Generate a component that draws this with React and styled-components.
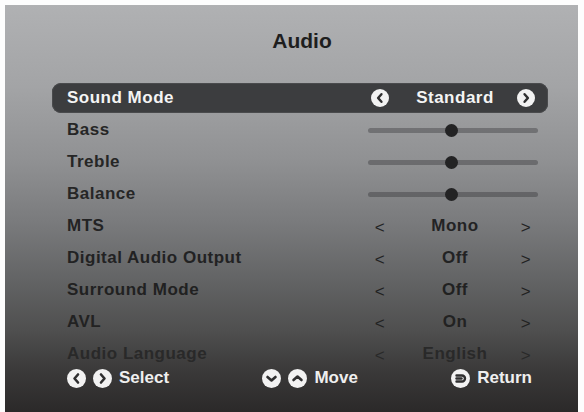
import React from "react";
import styled, { createGlobalStyle } from "styled-components";

const GlobalStyle = createGlobalStyle`
  html, body {
    margin: 0;
    padding: 0;
    background: #fdfdfd;
    font-family: "Liberation Sans", Arial, sans-serif;
  }
`;

const Screen = styled.div`
  margin: 5px 0 0 5px;
  width: 573px;
  height: 407px;
  box-sizing: border-box;
  padding: 24px 0 0 47px;
  background: linear-gradient(
    to bottom,
    #b0b1b3 0%,
    #a3a4a6 20%,
    #909193 38%,
    #7a7b7d 53%,
    #626364 68%,
    #4f4f4f 80%,
    #3a3939 90%,
    #2b2929 100%
  );
  overflow: hidden;
`;

const Title = styled.h1`
  margin: 0;
  width: 496px;
  padding-left: 4px;
  box-sizing: border-box;
  text-align: center;
  font-size: 21px;
  line-height: 24px;
  font-weight: bold;
  color: #1e1e1e;
`;

const List = styled.div`
  margin-top: 30px;
  width: 496px;
  display: flex;
  flex-direction: column;
  gap: 2px;
`;

const Row = styled.div`
  height: 30px;
  display: flex;
  align-items: center;
  justify-content: space-between;
  padding: 0 10px 0 15px;
  border-radius: 9px;
  background: ${(p) => (p.$active ? "#3c3d3f" : "transparent")};
  box-shadow: ${(p) => (p.$active ? "inset 0 0 0 1px #4a4b4d" : "none")};
  color: ${(p) => (p.$active ? "#f4f4f4" : p.$color || "#262626")};
  font-size: 17px;
  font-weight: bold;
  letter-spacing: 0.5px;
`;

const Label = styled.span`
  white-space: nowrap;
`;

const Control = styled.div`
  width: 170px;
  display: grid;
  grid-template-columns: 24px 1fr 24px;
  align-items: center;
  justify-items: center;
`;

const Value = styled.span`
  padding-left: 4px;
`;

const Arrow = styled.span`
  font-size: 17px;
  font-weight: normal;
  padding-top: 4px;
`;

const Track = styled.div`
  position: relative;
  width: 170px;
  height: 5px;
  border-radius: 3px;
  background: rgba(40, 40, 42, 0.35);
`;

const Knob = styled.div`
  position: absolute;
  top: 50%;
  width: 13px;
  height: 13px;
  margin: -6.5px 0 0 -6.5px;
  border-radius: 50%;
  background: #232324;
`;

const Footer = styled.div`
  margin: -1px 0 0 15px;
  width: 465px;
  height: 20px;
  display: flex;
  justify-content: space-between;
  align-items: center;
`;

const Hint = styled.div`
  display: flex;
  align-items: center;
  gap: 7px;
  color: #efefef;
  font-size: 17px;
  font-weight: bold;
`;

const HintText = styled.span`
  margin-left: 0;
`;

const chevrons = {
  left: "M11 5.5 L7.5 9.5 L11 13.5",
  right: "M8 5.5 L11.5 9.5 L8 13.5",
  down: "M5.5 8 L9.5 11.5 L13.5 8",
  up: "M5.5 11 L9.5 7.5 L13.5 11",
};

const RoundIcon = ({ dir, size = 19, bg = "#f2f2f2", fg = "#2f2f30" }) => (
  <svg width={size} height={size} viewBox="0 0 19 19">
    <circle cx="9.5" cy="9.5" r="9.5" fill={bg} />
    {dir === "return" ? (
      <g fill="none" stroke={fg} strokeWidth="2.4" strokeLinecap="round" strokeLinejoin="round">
        <path d="M5.5 6.5 H11 a3 3 0 0 1 0 6 H5.5" />
        <path d="M5.5 9.5 H10.5" />
      </g>
    ) : (
      <path
        d={chevrons[dir]}
        fill="none"
        stroke={fg}
        strokeWidth="2.6"
        strokeLinecap="round"
        strokeLinejoin="round"
      />
    )}
  </svg>
);

const Slider = ({ value }) => (
  <Track>
    <Knob style={{ left: `${value}%` }} />
  </Track>
);

const items = [
  { label: "Bass", slider: 49 },
  { label: "Treble", slider: 49 },
  { label: "Balance", slider: 49 },
  { label: "MTS", value: "Mono", color: "#232324" },
  { label: "Digital Audio Output", value: "Off", color: "#222223" },
  { label: "Surround Mode", value: "Off", color: "#212121" },
  { label: "AVL", value: "On", color: "#222222" },
  { label: "Audio Language", value: "English", color: "#292929" },
];

const App = () => (
  <>
    <GlobalStyle />
    <Screen>
      <Title>Audio</Title>
      <List>
        <Row $active>
          <Label>Sound Mode</Label>
          <Control>
            <RoundIcon dir="left" size={18} />
            <Value>Standard</Value>
            <RoundIcon dir="right" size={18} />
          </Control>
        </Row>
        {items.map((it) => (
          <Row key={it.label} $color={it.color}>
            <Label>{it.label}</Label>
            {it.slider !== undefined ? (
              <Slider value={it.slider} />
            ) : (
              <Control>
                <Arrow>&lt;</Arrow>
                <Value>{it.value}</Value>
                <Arrow>&gt;</Arrow>
              </Control>
            )}
          </Row>
        ))}
      </List>
      <Footer>
        <Hint>
          <RoundIcon dir="left" />
          <RoundIcon dir="right" />
          <HintText>Select</HintText>
        </Hint>
        <Hint>
          <RoundIcon dir="down" />
          <RoundIcon dir="up" />
          <HintText>Move</HintText>
        </Hint>
        <Hint>
          <RoundIcon dir="return" />
          <HintText>Return</HintText>
        </Hint>
      </Footer>
    </Screen>
  </>
);

export default App;
